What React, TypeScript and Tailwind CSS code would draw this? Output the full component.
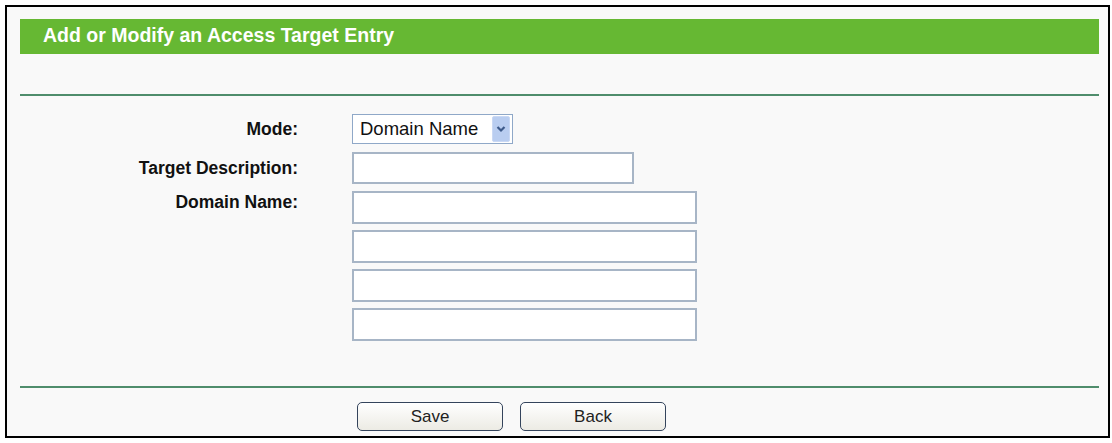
import React from 'react'

const labelCls = 'w-[291px] shrink-0 text-right text-[17.5px] leading-[20px] font-bold text-[#111]'
const inputCls = 'block bg-white border-2 border-[#a7b5c6]'

function Row({ label, children, labelTop }: { label: string; children: React.ReactNode; labelTop: string }) {
  return (
    <div className="flex items-start">
      <div className={`${labelCls} ${labelTop}`}>{label}</div>
      <div className="ml-[54px]">{children}</div>
    </div>
  )
}

export default function App() {
  const domains = [0, 1, 2, 3]
  return (
    <div className="w-[1112px] h-[443px] bg-white pt-[5px] pl-[5px]" style={{ fontFamily: '"Liberation Sans", Arial, sans-serif' }}>
      <div className="w-[1105px] h-[433px] border-2 border-black bg-[#f9f9f9] flex flex-col">
        {/* title bar */}
        <div className="mt-[12px] ml-[13px] mr-[9px] h-[35px] bg-[#66b833] flex items-center pl-[23px] pb-[2px]">
          <span className="text-white font-bold text-[19.5px] leading-none">Add or Modify an Access Target Entry</span>
        </div>

        <div className="mt-[40px] ml-[13px] mr-[9px] h-[2px] bg-[#4f8d6c]" />

        <div className="mt-[18px] flex flex-col">
          <Row label="Mode:" labelTop="mt-[5px]">
            <div className="flex items-center w-[161px] h-[30px] border border-[#8fa8c8] bg-white">
              <span className="flex-1 pl-[7px] text-[18.5px] leading-none text-[#111]">Domain Name</span>
              <div className="w-[18px] h-[26px] mr-[2px] rounded-[2px] bg-[#b9cdf0] border border-[#c9d8f4] flex items-center justify-center">
                <svg width="10" height="8" viewBox="0 0 10 8">
                  <path d="M1.5 2 L5 5.5 L8.5 2" fill="none" stroke="#3d5a8a" strokeWidth="2.2" />
                </svg>
              </div>
            </div>
          </Row>

          <div className="mt-[8px]">
            <Row label="Target Description:" labelTop="mt-[6px]">
              <div className={`${inputCls} w-[282px] h-[32px]`} />
            </Row>
          </div>

          <div className="mt-[7px]">
            <Row label="Domain Name:" labelTop="mt-[1px]">
              <div className="flex flex-col gap-[6px]">
                {domains.map(d => (
                  <div key={d} className={`${inputCls} w-[345px] h-[33px]`} />
                ))}
              </div>
            </Row>
          </div>
        </div>

        <div className="mt-[45px] ml-[13px] mr-[9px] h-[2px] bg-[#4f8d6c]" />

        <div className="mt-[14px] flex pl-[350px] gap-[17px]">
          {['Save', 'Back'].map(b => (
            <button
              key={b}
              className="w-[146px] h-[29px] rounded-[5px] border border-[#34445c] bg-gradient-to-b from-[#ffffff] to-[#ecebe4] text-[17px] leading-none text-[#222]"
            >
              {b}
            </button>
          ))}
        </div>
      </div>
    </div>
  )
}
